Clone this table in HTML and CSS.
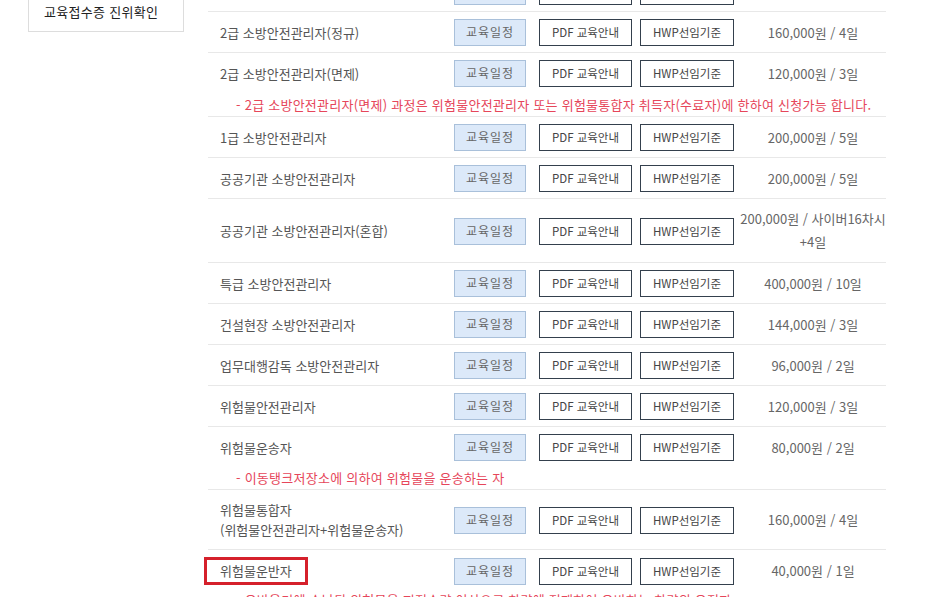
FILE: index.html
```html
<!DOCTYPE html>
<html lang="ko">
<head>
  <meta charset="UTF-8">
  <meta name="viewport" content="width=device-width, initial-scale=1.0">
  <title>교육과정 안내</title>
  <link rel="stylesheet" href="styles.css">
</head>
<body>
  <div id="page">
    <div id="side">
      <ul class="side-menu">
        <li>교육접수증 진위확인</li>
      </ul>
    </div>
    <div id="content">
      <table class="course">
        <tbody>
          <tr>
            <td class="name">2급 소방안전관리자</td>
            <td class="btns"><a class="btn blue">교육일정</a><a class="btn line pdf">PDF 교육안내</a><a class="btn line">HWP선임기준</a></td>
            <td class="price">160,000원 / 4일</td>
          </tr>
          <tr>
            <td class="name">2급 소방안전관리자(정규)</td>
            <td class="btns"><a class="btn blue">교육일정</a><a class="btn line pdf">PDF 교육안내</a><a class="btn line">HWP선임기준</a></td>
            <td class="price">160,000원 / 4일</td>
          </tr>
          <tr class="noline">
            <td class="name">2급 소방안전관리자(면제)</td>
            <td class="btns"><a class="btn blue">교육일정</a><a class="btn line pdf">PDF 교육안내</a><a class="btn line">HWP선임기준</a></td>
            <td class="price">120,000원 / 3일</td>
          </tr>
          <tr class="note">
            <td colspan="3">- 2급 소방안전관리자(면제) 과정은 위험물안전관리자 또는 위험물통합자 취득자(수료자)에 한하여 신청가능 합니다.</td>
          </tr>
          <tr>
            <td class="name">1급 소방안전관리자</td>
            <td class="btns"><a class="btn blue">교육일정</a><a class="btn line pdf">PDF 교육안내</a><a class="btn line">HWP선임기준</a></td>
            <td class="price">200,000원 / 5일</td>
          </tr>
          <tr>
            <td class="name">공공기관 소방안전관리자</td>
            <td class="btns"><a class="btn blue">교육일정</a><a class="btn line pdf">PDF 교육안내</a><a class="btn line">HWP선임기준</a></td>
            <td class="price">200,000원 / 5일</td>
          </tr>
          <tr>
            <td class="name">공공기관 소방안전관리자(혼합)</td>
            <td class="btns"><a class="btn blue">교육일정</a><a class="btn line pdf">PDF 교육안내</a><a class="btn line">HWP선임기준</a></td>
            <td class="price two">200,000원 / 사이버16차시<br>+4일</td>
          </tr>
          <tr>
            <td class="name">특급 소방안전관리자</td>
            <td class="btns"><a class="btn blue">교육일정</a><a class="btn line pdf">PDF 교육안내</a><a class="btn line">HWP선임기준</a></td>
            <td class="price">400,000원 / 10일</td>
          </tr>
          <tr>
            <td class="name">건설현장 소방안전관리자</td>
            <td class="btns"><a class="btn blue">교육일정</a><a class="btn line pdf">PDF 교육안내</a><a class="btn line">HWP선임기준</a></td>
            <td class="price">144,000원 / 3일</td>
          </tr>
          <tr>
            <td class="name">업무대행감독 소방안전관리자</td>
            <td class="btns"><a class="btn blue">교육일정</a><a class="btn line pdf">PDF 교육안내</a><a class="btn line">HWP선임기준</a></td>
            <td class="price">96,000원 / 2일</td>
          </tr>
          <tr>
            <td class="name">위험물안전관리자</td>
            <td class="btns"><a class="btn blue">교육일정</a><a class="btn line pdf">PDF 교육안내</a><a class="btn line">HWP선임기준</a></td>
            <td class="price">120,000원 / 3일</td>
          </tr>
          <tr class="noline">
            <td class="name">위험물운송자</td>
            <td class="btns"><a class="btn blue">교육일정</a><a class="btn line pdf">PDF 교육안내</a><a class="btn line">HWP선임기준</a></td>
            <td class="price">80,000원 / 2일</td>
          </tr>
          <tr class="note short">
            <td colspan="3">- 이동탱크저장소에 의하여 위험물을 운송하는 자</td>
          </tr>
          <tr class="tall">
            <td class="name">위험물통합자<br>(위험물안전관리자+위험물운송자)</td>
            <td class="btns"><a class="btn blue">교육일정</a><a class="btn line pdf">PDF 교육안내</a><a class="btn line">HWP선임기준</a></td>
            <td class="price">160,000원 / 4일</td>
          </tr>
          <tr class="noline">
            <td class="name"><span class="mark">위험물운반자</span></td>
            <td class="btns"><a class="btn blue">교육일정</a><a class="btn line pdf">PDF 교육안내</a><a class="btn line">HWP선임기준</a></td>
            <td class="price">40,000원 / 1일</td>
          </tr>
          <tr class="note last">
            <td colspan="3">- 운반용기에 수납된 위험물을 지정수량 이상으로 차량에 적재하여 운반하는 차량의 운전자</td>
          </tr>
        </tbody>
      </table>
    </div>
  </div>
</body>
</html>
```

FILE: styles.css
```css
html, body {
  margin: 0;
  padding: 0;
  background: #fff;
  font-family: "Noto Sans CJK KR", "Noto Sans", sans-serif;
  font-size: 13px;
  color: #555;
  overflow: hidden;
}
#page {
  display: flex;
  align-items: flex-start;
  margin-top: -29px;
}
#side {
  width: 156px;
  margin-left: 28px;
  margin-top: 22px;
}
.side-menu {
  list-style: none;
  margin: 0;
  padding: 0;
  border: 1px solid #ddd;
  border-top: 0;
}
.side-menu li {
  padding: 9px 15px;
  line-height: 20px;
  color: #222;
  letter-spacing: 0.3px;
}
#content {
  margin-left: 24px;
  width: 678px;
}
.course {
  width: 100%;
  border-collapse: collapse;
}
.course td {
  padding: 7px 0 6px;
  line-height: 20px;
  border-bottom: 1px solid #e8e8e8;
  vertical-align: middle;
}
.course tr.noline td {
  border-bottom: 0;
}
.course .name {
  width: 234px;
  padding-left: 12px;
}
.course .btns {
  width: 280px;
  white-space: nowrap;
  font-size: 0;
}
.course .price {
  padding-left: 6px;
  text-align: center;
  color: #666;
}
.course .price.two {
  line-height: 23px;
  padding: 8px 0 9px 6px;
}
.course tr.tall td {
  padding-top: 10px;
  padding-bottom: 9px;
}
.course tr.note td {
  height: 23px;
  padding: 0 0 0 28px;
  line-height: 22px;
  color: #e6465a;
  letter-spacing: 0.25px;
}
.course tr.note.short td {
  height: 22px;
}
.course tr.note.last td {
  vertical-align: top;
  line-height: 18px;
}
.btn {
  display: inline-block;
  box-sizing: border-box;
  height: 27px;
  line-height: 24px;
  font-size: 12px;
  text-align: center;
  vertical-align: middle;
  cursor: pointer;
}
.btn.blue {
  width: 72px;
  background: #dce9f9;
  border: 1px solid #a9c0da;
  color: #666;
  letter-spacing: 1px;
}
.btn.line {
  width: 94px;
  margin-left: 8px;
  background: #fff;
  border: 1px solid #34404d;
  color: #444;
  font-size: 11.5px;
}
.btn.pdf {
  width: 93px;
  margin-left: 13px;
}
.mark {
  display: inline-block;
  margin-left: -16px;
  padding: 1px 13px;
  border: 3px solid #d5202b;
}
```
